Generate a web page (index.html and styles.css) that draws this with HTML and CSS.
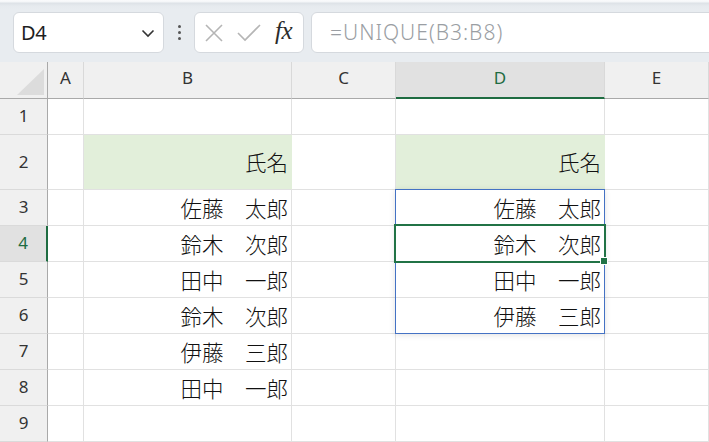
FILE: index.html
```html
<!DOCTYPE html>
<html lang="ja">
<head>
<meta charset="utf-8">
<title>UNIQUE</title>
<link rel="stylesheet" href="styles.css">
</head>
<body>
<div class="toolbar">
  <div class="namebox">
    <span class="ref">D4</span>
    <svg class="chev" width="14" height="9" viewBox="0 0 14 9"><path d="M1.5 1.5 L7 7 L12.5 1.5" fill="none" stroke="#333" stroke-width="1.6"/></svg>
  </div>
  <div class="dots"><i></i><i></i><i></i></div>
  <div class="fxbox">
    <svg class="ic" width="18" height="18" viewBox="0 0 18 18"><path d="M1 1 L17 17 M17 1 L1 17" stroke="#b5b5b5" stroke-width="1.6" fill="none"/></svg>
    <svg class="ic" width="24" height="18" viewBox="0 0 24 18"><path d="M1 9 L8 16 L23 1" stroke="#b5b5b5" stroke-width="1.6" fill="none"/></svg>
    <span class="fx">fx</span>
  </div>
  <div class="formula">=UNIQUE(B3:B8)</div>
</div>

<div class="sheet">
  <div class="corner"><span class="tri"></span></div>
  <div class="ch">A</div>
  <div class="ch">B</div>
  <div class="ch">C</div>
  <div class="ch ch-sel">D</div>
  <div class="ch">E</div>

  <div class="rh">1</div>
  <div class="c"></div><div class="c"></div><div class="c"></div><div class="c"></div><div class="c"></div>

  <div class="rh">2</div>
  <div class="c"></div><div class="c g">氏名</div><div class="c"></div><div class="c g">氏名</div><div class="c"></div>

  <div class="rh">3</div>
  <div class="c"></div><div class="c">佐藤　太郎</div><div class="c"></div><div class="c">佐藤　太郎</div><div class="c"></div>

  <div class="rh rh-sel">4</div>
  <div class="c"></div><div class="c">鈴木　次郎</div><div class="c"></div><div class="c">鈴木　次郎</div><div class="c"></div>

  <div class="rh">5</div>
  <div class="c"></div><div class="c">田中　一郎</div><div class="c"></div><div class="c">田中　一郎</div><div class="c"></div>

  <div class="rh">6</div>
  <div class="c"></div><div class="c">鈴木　次郎</div><div class="c"></div><div class="c">伊藤　三郎</div><div class="c"></div>

  <div class="rh">7</div>
  <div class="c"></div><div class="c">伊藤　三郎</div><div class="c"></div><div class="c"></div><div class="c"></div>

  <div class="rh">8</div>
  <div class="c"></div><div class="c">田中　一郎</div><div class="c"></div><div class="c"></div><div class="c"></div>

  <div class="rh">9</div>
  <div class="c"></div><div class="c"></div><div class="c"></div><div class="c"></div><div class="c"></div>

  <div class="spill"></div>
  <div class="selection"></div>
  <div class="handle"></div>
</div>
</body>
</html>
```

FILE: styles.css
```css
* { box-sizing: border-box; }
html, body {
  margin: 0;
  padding: 0;
  width: 709px;
  height: 442px;
  overflow: hidden;
  background: #fff;
  font-family: "Noto Sans", "Noto Sans CJK JP", sans-serif;
}

.toolbar {
  height: 62px;
  display: flex;
  align-items: flex-start;
  padding: 12px 0 0 13px;
  overflow: hidden;
  background: linear-gradient(#fafbfc 0, #f4f6f8 2px, #dde2e7 3px, #e6eaee 6px, #e8ecf0 10px);
}

.namebox {
  width: 151px;
  height: 41px;
  background: #fff;
  border: 1px solid #d5d9de;
  border-radius: 6px;
  display: flex;
  align-items: center;
  justify-content: space-between;
  padding: 0 8px 0 7px;
}
.ref {
  font-size: 20px;
  color: #1f1f1f;
  letter-spacing: -0.3px;
}
.chev { margin-top: 1px; }

.dots {
  width: 8px;
  margin: 0 11px;
  height: 41px;
  display: flex;
  flex-direction: column;
  align-items: center;
  justify-content: center;
  gap: 3px;
}
.dots i {
  display: block;
  width: 3px;
  height: 3px;
  border-radius: 50%;
  background: #555;
}

.fxbox {
  width: 110px;
  height: 41px;
  background: #fff;
  border: 1px solid #d5d9de;
  border-radius: 6px;
  display: flex;
  align-items: center;
  padding: 0 0 0 10px;
}
.fxbox .ic:first-child { margin-right: 14px; }
.fxbox .ic:nth-child(2) { margin-right: 14px; margin-top: 1px; }
.fx {
  font-family: "Liberation Serif", "DejaVu Serif", serif;
  font-style: italic;
  font-size: 25px;
  color: #2b2b2b;
  letter-spacing: -0.5px;
  margin-top: -3px;
}

.formula {
  flex: 1;
  margin-left: 7px;
  margin-right: -12px;
  height: 41px;
  background: #fff;
  border: 1px solid #d5d9de;
  border-radius: 6px;
  display: flex;
  align-items: center;
  padding: 0 0 2px 18px;
  font-size: 21px;
  font-weight: 300;
  color: #9a9ea3;
  letter-spacing: 1px;
}

.sheet {
  position: relative;
  display: grid;
  grid-template-columns: 48px 36px 208px 104px 209px 1fr;
  grid-template-rows: 37px 36px 55px 36px 36px 36px 36px 36px 36px 36px;
}

.corner {
  position: relative;
  background: #f0f0f0;
  border-right: 1px solid #a9a9a9;
  border-bottom: 1px solid #a9a9a9;
}
.tri {
  position: absolute;
  right: 3px;
  bottom: 3px;
  width: 0;
  height: 0;
  border-left: 27px solid transparent;
  border-bottom: 26px solid #dcdcdc;
}

.ch {
  background: #f0f0f0;
  border-right: 1px solid #d9d9d9;
  border-bottom: 1px solid #a9a9a9;
  display: flex;
  align-items: center;
  justify-content: center;
  padding-bottom: 6px;
  font-size: 17px;
  color: #333;
}
.ch-sel {
  background: #e1e1e1;
  color: #1e6c41;
  border-bottom: 2px solid #1e6c41;
  padding-bottom: 5px;
}

.rh {
  background: #f0f0f0;
  border-right: 1px solid #a9a9a9;
  border-bottom: 1px solid #dadada;
  display: flex;
  align-items: center;
  justify-content: center;
  padding-bottom: 2px;
  font-size: 17px;
  color: #333;
}
.rh-sel {
  background: #e1e1e1;
  color: #1e6c41;
  border-right: 2px solid #1e6c41;
}

.c {
  border-right: 1px solid #e1e1e1;
  border-bottom: 1px solid #e1e1e1;
  display: flex;
  align-items: center;
  justify-content: flex-end;
  padding: 0 3px 1px 0;
  font-family: "Noto Sans CJK JP", sans-serif;
  font-size: 21.5px;
  font-weight: 300;
  color: #111;
  white-space: nowrap;
}
.g {
  background: #e2efda;
  border-right-color: #e2efda;
}

.spill {
  position: absolute;
  left: 395px;
  top: 127px;
  width: 210px;
  height: 145px;
  border: 1px solid #4472c4;
  box-shadow: 0 1px 6px rgba(0, 0, 0, 0.12);
  pointer-events: none;
}
.selection {
  position: absolute;
  left: 394px;
  top: 162px;
  width: 212px;
  height: 39px;
  border: 2px solid #217346;
  pointer-events: none;
}
.handle {
  position: absolute;
  left: 600px;
  top: 195px;
  width: 8px;
  height: 8px;
  background: #217346;
  border: 1px solid #fff;
}
```
